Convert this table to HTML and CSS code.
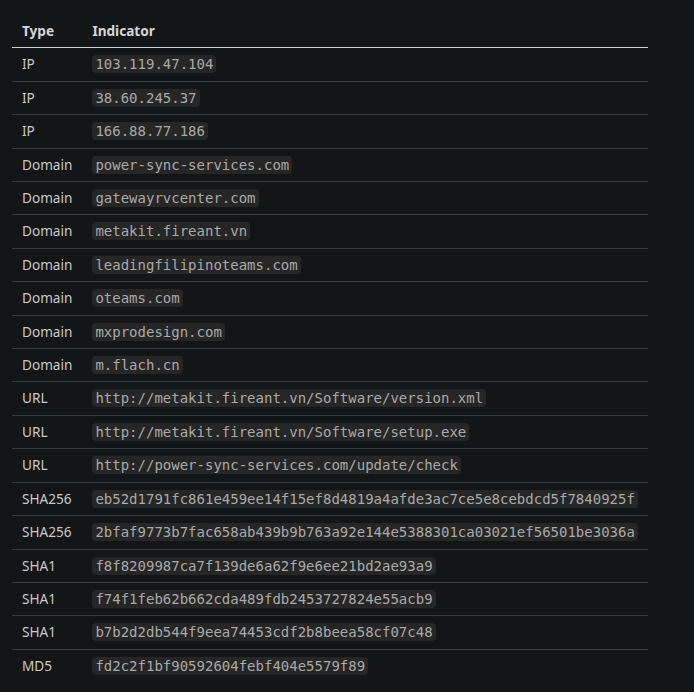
FILE: index.html
```html
<!DOCTYPE html>
<html lang="en">
<head>
    <meta charset="UTF-8">
    <meta name="viewport" content="width=device-width, initial-scale=1.0">
    <title>Indicators of Compromise</title>
    <link rel="stylesheet" href="styles.css">
</head>
<body>
    <table class="ioc-table">
        <thead>
            <tr>
                <th>Type</th>
                <th>Indicator</th>
            </tr>
        </thead>
        <tbody>
            <tr><td>IP</td><td><code>103.119.47.104</code></td></tr>
            <tr><td>IP</td><td><code>38.60.245.37</code></td></tr>
            <tr><td>IP</td><td><code>166.88.77.186</code></td></tr>
            <tr><td>Domain</td><td><code>power-sync-services.com</code></td></tr>
            <tr><td>Domain</td><td><code>gatewayrvcenter.com</code></td></tr>
            <tr><td>Domain</td><td><code>metakit.fireant.vn</code></td></tr>
            <tr><td>Domain</td><td><code>leadingfilipinoteams.com</code></td></tr>
            <tr><td>Domain</td><td><code>oteams.com</code></td></tr>
            <tr><td>Domain</td><td><code>mxprodesign.com</code></td></tr>
            <tr><td>Domain</td><td><code>m.flach.cn</code></td></tr>
            <tr><td>URL</td><td><code>http://metakit.fireant.vn/Software/version.xml</code></td></tr>
            <tr><td>URL</td><td><code>http://metakit.fireant.vn/Software/setup.exe</code></td></tr>
            <tr><td>URL</td><td><code>http://power-sync-services.com/update/check</code></td></tr>
            <tr><td>SHA256</td><td><code>eb52d1791fc861e459ee14f15ef8d4819a4afde3ac7ce5e8cebdcd5f7840925f</code></td></tr>
            <tr><td>SHA256</td><td><code>2bfaf9773b7fac658ab439b9b763a92e144e5388301ca03021ef56501be3036a</code></td></tr>
            <tr><td>SHA1</td><td><code>f8f8209987ca7f139de6a62f9e6ee21bd2ae93a9</code></td></tr>
            <tr><td>SHA1</td><td><code>f74f1feb62b662cda489fdb2453727824e55acb9</code></td></tr>
            <tr><td>SHA1</td><td><code>b7b2d2db544f9eea74453cdf2b8beea58cf07c48</code></td></tr>
            <tr><td>MD5</td><td><code>fd2c2f1bf90592604febf404e5579f89</code></td></tr>
        </tbody>
    </table>
</body>
</html>
```

FILE: styles.css
```css
body {
    margin: 0;
    padding: 15px 12px;
    background-color: #141517;
    color: #c9c9c9;
    font-family: 'Noto Sans', sans-serif;
    font-size: 13.6px;
}

.ioc-table {
    border-collapse: collapse;
}

.ioc-table th,
.ioc-table td {
    padding: 6px 10px;
    line-height: 20.4px;
    text-align: left;
    white-space: nowrap;
}

.ioc-table th {
    color: #d6d6d6;
    font-weight: bold;
    border-bottom: 1px solid #d0d0d0;
}

.ioc-table td {
    border-bottom: 1px solid #3a3a3a;
}

.ioc-table tbody tr:last-child td {
    border-bottom: none;
}

code {
    font-family: 'DejaVu Sans Mono', monospace;
    font-size: 14px;
    color: #a9a9a9;
    background-color: #262626;
    padding: 1px 3px;
    border-radius: 4px;
}
```
